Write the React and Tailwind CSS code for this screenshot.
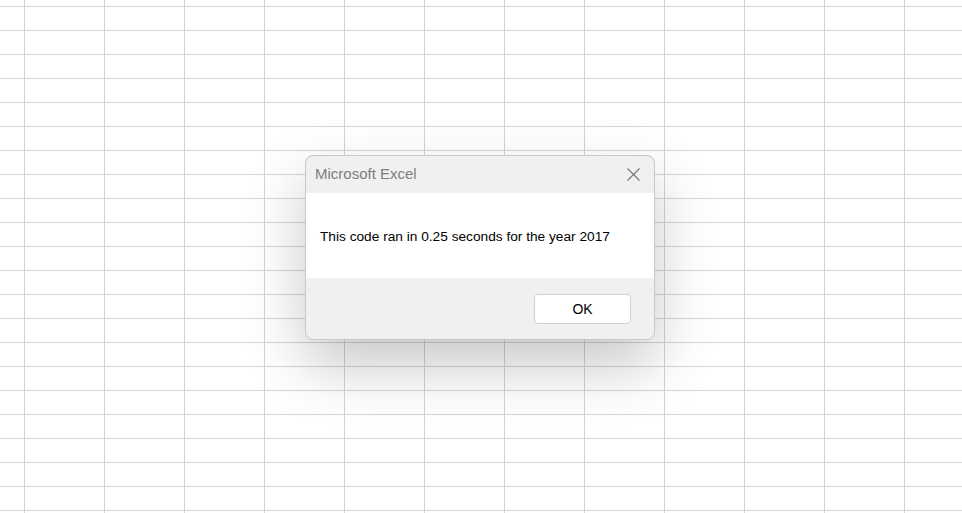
export default function App() {
  return (
    <div
      className="relative w-[962px] h-[513px] overflow-hidden bg-white bg-[image:linear-gradient(to_right,#d4d4d4_1px,transparent_1px),linear-gradient(to_bottom,#d4d4d4_1px,transparent_1px)] bg-[size:80px_24px] bg-[position:24px_6px]"
      style={{ fontFamily: '"Segoe UI", "Liberation Sans", Arial, sans-serif' }}
    >
      {/* message box */}
      <div className="absolute left-[305px] top-[155px] w-[350px] rounded-[8px] border border-[#c8c8c8] bg-[#f0f0f0] overflow-hidden shadow-[0_26px_60px_rgba(0,0,0,0.22)]">
        <div className="flex items-center justify-between h-[37px] pl-[9px] pr-[14px]">
          <span className="text-[15px] text-[#7d7d7d]">Microsoft Excel</span>
          <svg width="13" height="13" viewBox="0 0 13 13" className="text-[#777]">
            <path d="M0.5 0.5 L12.5 12.5 M12.5 0.5 L0.5 12.5" stroke="currentColor" strokeWidth="1.1" />
          </svg>
        </div>
        <div className="bg-white h-[85px] flex items-center pl-[14px] pt-[3px]">
          <p className="text-[13.7px] text-black">This code ran in 0.25 seconds for the year 2017</p>
        </div>
        <div className="h-[61px] flex items-start justify-end pt-[16px] pr-[23px]">
          <button className="w-[97px] h-[30px] pt-[1px] rounded-[4px] border border-[#d0d0d0] bg-white text-[14px] text-black">
            OK
          </button>
        </div>
      </div>
    </div>
  );
}
